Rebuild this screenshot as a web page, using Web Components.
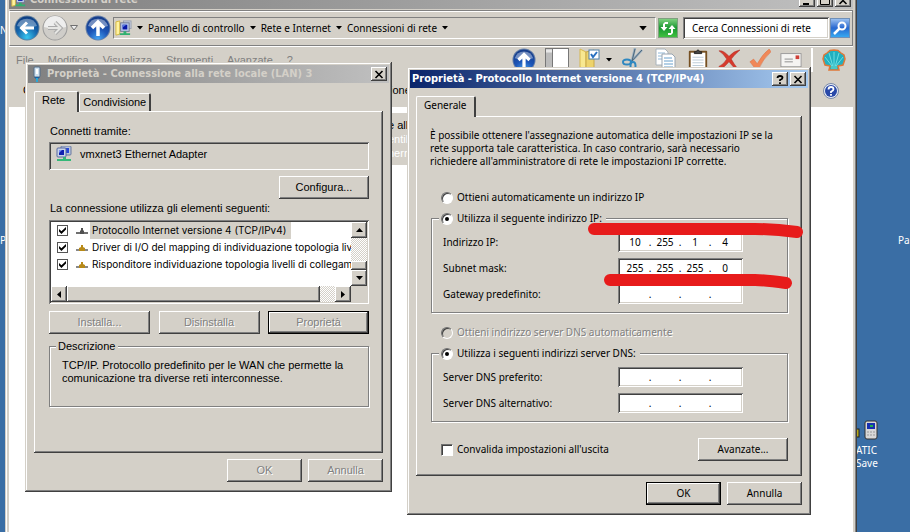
<!DOCTYPE html>
<html lang="it">
<head>
<meta charset="utf-8">
<title>Connessioni di rete</title>
<style>
  html, body {
    margin: 0;
    height: 100%;
    overflow: hidden;
  }
  body {
    --face: #d4d0c8;
    --shade: #808080;
    --dark: #404040;
    --ui: "Noto Sans", sans-serif;
    --sans: "Liberation Sans", sans-serif;
    --caption: "DejaVu Sans Condensed", "DejaVu Sans", sans-serif;
    --raised: inset -1px -1px #404040, inset 1px 1px #fff, inset -2px -2px #808080;
    --sunken: inset 1px 1px #808080, inset -1px -1px #fff, inset 2px 2px #404040, inset -2px -2px #d4d0c8;
    font: 10px/13px var(--ui);
    color: #000;
  }
</style>
</head>
<body>
<net-desktop></net-desktop>

<script>
var icons = {
  back: '<svg viewBox="0 0 26 26"><defs><radialGradient id="g" cx=".5" cy=".9" r=".9"><stop offset="0" stop-color="#38c6f0"/><stop offset=".5" stop-color="#1668ae"/><stop offset="1" stop-color="#0c3a80"/></radialGradient></defs><circle cx="13" cy="13" r="12.5" fill="#5f7f9c"/><circle cx="13" cy="13" r="11.5" fill="url(#g)"/><path d="M3 11A10.5 10.5 0 0 1 23 11Q13 14 3 11" fill="#fff" opacity=".35"/><path d="M20 13H8M13 7.5L7.5 13L13 18.5" fill="none" stroke="#fff" stroke-width="3"/></svg>',
  forward: '<svg viewBox="0 0 26 26"><circle cx="13" cy="13" r="12.5" fill="#9b9b9b"/><circle cx="13" cy="13" r="11.5" fill="#cfcdc9"/><path d="M2 12A11 11 0 0 1 24 12Q13 15 2 12" fill="#eee"/><path d="M6 13H18M13 7.5L18.5 13L13 18.5" fill="none" stroke="#aaa" stroke-width="4"/><path d="M6 13H18M13 7.5L18.5 13L13 18.5" fill="none" stroke="#e6e6e4" stroke-width="2"/></svg>',
  up: '<svg viewBox="0 0 26 26"><defs><radialGradient id="g" cx=".5" cy="1" r=".9"><stop offset="0" stop-color="#48a8f4"/><stop offset=".5" stop-color="#1d56b8"/><stop offset="1" stop-color="#163e8c"/></radialGradient></defs><circle cx="13" cy="13" r="12.5" fill="#6880a8"/><circle cx="13" cy="13" r="11.5" fill="url(#g)"/><path d="M3 11A10.5 10.5 0 0 1 23 11Q13 14 3 11" fill="#fff" opacity=".4"/><path d="M13 21V8M7 13L13 7L19 13" fill="none" stroke="#fff" stroke-width="3.5"/></svg>',
  chevron: '<svg viewBox="0 0 8 6"><path d="M.5 .5H7.5L4 5Z" fill="#eee" stroke="#707070"/></svg>',
  arrow: '<svg viewBox="0 0 6 4"><path d="M0 0H6L3 3.5Z"/></svg>',
  net: '<svg viewBox="0 0 16 16"><rect x="5" y="0" width="10" height="9" rx="1" fill="#b8c4dc" stroke="#6878a0"/><rect x="7" y="2" width="6" height="5" fill="#2848d8"/><rect x="1" y="2" width="9" height="9" rx="1" fill="#c8d4e8" stroke="#5868a0"/><rect x="3" y="4" width="5" height="5" fill="#1020b0"/><path d="M3 4H6L3 7Z" fill="#7890f0"/><path d="M7 11H10V13H15V15H1V13H7Z" fill="#35b878"/></svg>',
  netfolder: '<svg viewBox="0 0 18 18"><path d="M1 2L5 1V15L1 16Z" fill="#fff3a0" stroke="#d8b840"/><rect x="9" y="1" width="8" height="8" fill="#c8d0e0" stroke="#98a0b0"/><rect x="6" y="3" width="9" height="9" fill="#b8c8ec" stroke="#707890"/><rect x="8" y="5" width="5" height="5" fill="#0818a8"/><path d="M8 5H12L8 8Z" fill="#5878e0"/><path d="M9 12H12V14H16V16H5V14H9Z" fill="#30b070"/></svg>',
  plug: '<svg viewBox="0 0 10 16"><rect x="2" y="1" width="6" height="10" rx="1" fill="#cfe0ee" stroke="#506c88"/><path d="M5 3V8" stroke="#fff" stroke-width="2"/><path d="M2 11H8L6 13H4Z" fill="#1d60a0"/><path d="M5 12V16" stroke="#28a8d8" stroke-width="2"/></svg>',
  refresh: '<svg viewBox="0 0 20 20"><defs><linearGradient id="g" x2="0" y2="1"><stop stop-color="#7fd07f"/><stop offset=".5" stop-color="#189830"/><stop offset="1" stop-color="#40c040"/></linearGradient></defs><rect width="20" height="20" fill="#80a080"/><rect x="1" y="1" width="18" height="18" fill="url(#g)"/><path d="M10 6H7V9H9.5L6 13L2.5 9H5V6L7 4H10ZM10 15H13V11H10.5L14 7L17.5 11H15V15L13 17H10Z" fill="#fff"/></svg>',
  search: '<svg viewBox="0 0 20 20"><defs><linearGradient id="g" x2="0" y2="1"><stop stop-color="#9ac0f0"/><stop offset=".5" stop-color="#2868d0"/><stop offset="1" stop-color="#38a8f0"/></linearGradient></defs><rect width="20" height="20" fill="#7090b8"/><rect x="1" y="1" width="18" height="18" fill="url(#g)"/><circle cx="12" cy="8" r="3.5" fill="none" stroke="#fff" stroke-width="2"/><path d="M9.5 10.5L4 16" stroke="#fff" stroke-width="2.5"/></svg>',
  split: '<svg viewBox="0 0 24 24"><rect x=".5" y=".5" width="23" height="23" fill="#fff" stroke="#777"/><rect x="1" y="1" width="6" height="22" fill="#bbb"/><path d="M7.5 1V23" stroke="#777"/><path d="M1 3H7" stroke="#e8e8e8" stroke-width="3"/></svg>',
  folder: '<svg viewBox="0 0 24 24"><path d="M2 1L8 4V22L2 19Z" fill="#f8e890" stroke="#d8b850"/><path d="M8 4L16 2V20L8 22Z" fill="#edd36c" stroke="#c8a848"/><rect x="11" y="2" width="10" height="9" fill="#fff" stroke="#5080a8"/><path d="M13 6L15 9L19 4" fill="none" stroke="#2870c0" stroke-width="2"/></svg>',
  cut: '<svg viewBox="0 0 24 24"><path d="M14 0L11 13M21 2L9 15" stroke="#9ab0c0" stroke-width="2.5"/><path d="M14 1L11 13M21 2L10 14" stroke="#4a6478" fill="none"/><ellipse cx="6" cy="14" rx="4" ry="2.5" fill="none" stroke="#3088c0" stroke-width="2"/><ellipse cx="12" cy="18" rx="2.5" ry="4" fill="none" stroke="#3088c0" stroke-width="2"/></svg>',
  copy: '<svg viewBox="0 0 24 24"><path d="M2 1H11L14 4V17H2Z" fill="#fff" stroke="#aab4bc"/><path d="M4 5H11M4 8H9M4 11H9" stroke="#90b8d8"/><path d="M8 6H18L21 9V23H8Z" fill="#fff" stroke="#98a4b0"/><path d="M10 10H18M10 13H19M10 16H19M10 19H19" stroke="#68a0cc"/></svg>',
  paste: '<svg viewBox="0 0 24 24"><rect x="2" y="2" width="20" height="22" rx="1" fill="#765022"/><rect x="4" y="4" width="16" height="20" fill="#fff"/><path d="M8 5V3H10Q12 -1 14 3H16V5Z" fill="#444" stroke="#222"/><path d="M6 9H18M6 12H18M6 15H18M6 18H18" stroke="#b8c8d4"/></svg>',
  del: '<svg viewBox="0 0 24 24"><path d="M1 2Q6 1 12 8Q17 2 24 1Q18 6 14.5 11Q17 16 22 22L18 21L12 14Q7 20 3 22L1 19Q6 17 9.5 11Q6 5 1 2Z" fill="#d63a2c" stroke="#a82820" stroke-width=".5"/></svg>',
  check: '<svg viewBox="0 0 24 24"><path d="M1 14L5 11L9 16Q15 5 22 0L24 3Q15 11 10 23H8Z" fill="#f08858" stroke="#d86c40" stroke-width=".5"/></svg>',
  mail: '<svg viewBox="0 0 24 24"><rect x="1" y="5" width="22" height="15" fill="#f5f4f2" stroke="#999"/><path d="M5 11H14M5 14H14" stroke="#888"/><rect x="17" y="7" width="4" height="4" fill="#d04038"/><path d="M1 20H23" stroke="#888" stroke-width="2"/></svg>',
  shell: '<svg viewBox="0 0 24 22"><path d="M7 21L8 17L3 16L1 10L2 6L5 4L8 1.5L12 1L16 1.5L19 4L22 6L23 10L21 16L16 17L17 21Z" fill="#20b0c0" stroke="#e07838" stroke-width="1.5"/><path d="M12 18V3M11 18L7 4M13 18L17 4M10 17L3 8M14 17L21 8" stroke="#80e8e8" stroke-width=".8"/><path d="M9 20V17H15V20Z" fill="#48c8c8"/></svg>',
  help: '<svg viewBox="0 0 16 16"><circle cx="8" cy="8" r="7.5" fill="#e8ecf4" stroke="#7888a8"/><circle cx="8" cy="8" r="6" fill="#2848a8"/><path d="M5.5 6.5Q5.5 4 8 4T10.5 6.2Q10.5 7.4 8 8.8V10M8 11V12.8" stroke="#fff" stroke-width="1.8" fill="none"/></svg>',
  close: '<svg viewBox="0 0 10 9"><path d="M1.500 1L8.500 8M8.500 1L1.500 8" stroke="#000" stroke-width="1.6"/></svg>',
  max: '<svg viewBox="0 0 10 9"><path d="M.5 1H9.5V8.5H.5Z" fill="none" stroke="#000"/><path d="M0 1H10" stroke="#000" stroke-width="2"/></svg>',
  min: '<svg viewBox="0 0 10 9"><path d="M1 8H7" stroke="#000" stroke-width="2"/></svg>',
  query: '<svg viewBox="0 0 10 9"><path d="M2.5 3Q2.5 1 5 1T7.5 2.8Q7.5 4 5 5V6M5 7.2V9" stroke="#000" stroke-width="1.8" fill="none"/></svg>',
  proto: '<svg viewBox="0 0 12 10"><path d="M0 7H12" stroke="#707070" stroke-width="2"/><path d="M4 8V5L5 4V2H7V4L8 5V8Z" fill="#505050"/></svg>',
  driver: '<svg viewBox="0 0 12 10"><path d="M0 7H12" stroke="#888" stroke-width="2"/><path d="M3 8V5L5 4V2H7V4L9 5V8Z" fill="#b88a18"/></svg>',
  tu: '<svg viewBox="0 0 7 4"><path d="M0 4H7L3.5 0Z"/></svg>',
  td: '<svg viewBox="0 0 7 4"><path d="M0 0H7L3.5 4Z"/></svg>',
  tl: '<svg viewBox="0 0 4 7"><path d="M4 0V7L0 3.5Z"/></svg>',
  tr: '<svg viewBox="0 0 4 7"><path d="M0 0V7L4 3.5Z"/></svg>',
  phone: '<svg viewBox="0 0 24 20"><rect x="0" y="9" width="4" height="8" fill="#b8a818" stroke="#222"/><rect x="10" y="1" width="12" height="18" rx="2" fill="#d8d8d8" stroke="#333"/><rect x="12" y="3" width="8" height="6" fill="#1830b0"/><rect x="15" y="5" width="3" height="2" fill="#28b048"/><path d="M12 12H20M12 15H20" stroke="#999" stroke-dasharray="2 1"/></svg>'
};

function define(name, css, html, setup) {
  var t = document.createElement('template');
  t.innerHTML = '<style>*{box-sizing:border-box}' + css + '</style>' + html;
  customElements.define(name, class extends HTMLElement {
    constructor() {
      super();
      this.attachShadow({mode: 'open'}).appendChild(t.content.cloneNode(true));
    }
    connectedCallback() {
      if(setup && !this.ready) {
        this.ready = true;
        setup(this, this.shadowRoot);
      }
    }
  });
}

// <net-icon name="..." w="16" h="16">
define('net-icon', ':host{display:block;flex:none}span,svg{display:block;width:100%;height:100%}', '<span></span>', function(el, root) {
  root.querySelector('span').innerHTML = icons[el.getAttribute('name')];
  el.style.width = el.getAttribute('w') + 'px';
  el.style.height = (el.getAttribute('h') || el.getAttribute('w')) + 'px';
});

// push button in the classic bevel
define('net-button',
  ':host{display:block;width:75px}' +
  'button{display:block;width:100%;height:23px;padding:0;border:0;background:var(--face);box-shadow:var(--raised);font:inherit;color:inherit}' +
  ':host([wide]){width:90px}:host([large]){width:101px}' +
  ':host([default]) button{border:1px solid #000}' +
  'button:disabled{color:var(--shade);text-shadow:1px 1px #fff}',
  '<button type="button"><slot></slot></button>',
  function(el, root) {
    root.querySelector('button').disabled = el.hasAttribute('disabled');
  });

// small square button with a glyph in it
define('net-mini',
  ':host{display:block;flex:none;width:16px;height:14px}' +
  'button{display:flex;align-items:center;justify-content:center;width:100%;height:100%;padding:0;border:0;background:var(--face);box-shadow:var(--raised)}',
  '<button type="button"></button>',
  function(el, root) {
    var b = root.querySelector('button');
    b.setAttribute('aria-label', el.getAttribute('label'));
    b.innerHTML = '<net-icon name="' + el.getAttribute('glyph') + '" w="' + (el.getAttribute('w') || 10) + '" h="' + (el.getAttribute('h') || 9) + '"></net-icon>';
  });

// bare button around a picture
define('net-tool',
  ':host{display:block;flex:none}button{display:block;padding:0;border:0;background:none}',
  '<button type="button"></button>',
  function(el, root) {
    var b = root.querySelector('button');
    b.setAttribute('aria-label', el.getAttribute('label'));
    b.innerHTML = '<net-icon name="' + el.getAttribute('glyph') + '" w="' + el.getAttribute('w') + '" h="' + (el.getAttribute('h') || el.getAttribute('w')) + '"></net-icon>';
  });

define('net-window',
  ':host{display:flex;flex-direction:column;position:absolute;padding:3px;background:var(--face);box-sizing:border-box;' +
    'box-shadow:inset -1px -1px #404040,inset 1px 1px var(--face),inset -2px -2px #808080,inset 2px 2px #fff}' +
  'header{display:flex;flex:none;align-items:center;height:18px;padding:0 2px;background:linear-gradient(90deg,#808080,#c0c0c0);color:var(--face);font:bold 11px/18px var(--caption);white-space:nowrap}' +
  ':host([active]) header{background:linear-gradient(90deg,#0a246a,#a6caf0);color:#fff}' +
  '.title{flex:1;display:flex;align-items:center;gap:3px}' +
  'nav{display:flex;gap:2px}' +
  'main{display:flex;flex:1;flex-direction:column}',
  '<header><div class="title"><slot name="icon"></slot><slot name="title"></slot></div><nav><slot name="controls"></slot></nav></header><main><slot></slot></main>');

// property sheet: tabs over a raised panel, a row of buttons under it
define('net-sheet',
  ':host{display:block;padding:8px 6px 7px}' +
  '.tabs{display:flex;align-items:flex-end;height:20px}' +
  '.tabs button{height:18px;padding:0 3px;border:1px solid #fff;border-right:2px solid var(--dark);border-bottom:0;border-radius:2px 2px 0 0;background:var(--face);font:inherit;color:inherit}' +
  '.tabs button:first-child{position:relative;height:21px;margin-bottom:-1px;padding:0 12px 3px 7px}' +
  ':host([single]) .tabs button:first-child{padding-right:7px}' +
  '.panel{display:flex;flex-direction:column;padding:14px 14px 14px 15px;box-shadow:var(--raised)}' +
  ':host([single]) .panel{padding:13px 14px 15px}' +
  '.foot{display:flex;justify-content:flex-end;gap:6px;margin-top:6px}',
  '<div class="tabs" role="tablist"></div><div class="panel"><slot></slot></div><div class="foot"><slot name="foot"></slot></div>',
  function(el, root) {
    var s = '';
    el.getAttribute('tabs').split(',').forEach(function(name, i) {
      s += '<button type="button" role="tab" aria-selected="' + (i === 0) + '">' + name + '</button>';
    });
    root.querySelector('.tabs').innerHTML = s;
  });

define('net-group',
  ':host{display:block}' +
  'fieldset{min-width:0;margin:0;padding:6px 12px 8px 11px;border:1px solid var(--shade);box-shadow:1px 1px #fff,inset 1px 1px #fff}' +
  'legend{padding:0 3px 0 2px;margin-left:-5px;background:var(--face)}' +
  ':host([fields]) fieldset{padding-top:7px}' +
  ':host([fields]) legend{margin-left:-4px;padding:0 4px 0 2px}' +
  '.in{display:flex;flex-direction:column;gap:6px}',
  '<fieldset><legend><slot name="legend"></slot></legend><div class="in"><slot></slot></div></fieldset>');

define('net-choice',
  ':host{display:block}' +
  'label{display:flex;align-items:center;gap:4px;height:13px;white-space:nowrap}' +
  'input{appearance:none;flex:none;width:12px;height:12px;margin:0;background:#fff;border:1px solid;border-color:#707070 #fff #fff #707070;box-shadow:inset 1px 1px #404040;display:grid;place-items:center}' +
  'input[type=radio]{border-radius:50%}' +
  'input[type=radio]:checked::before{content:"";width:4px;height:4px;border-radius:50%;background:#000}' +
  'input[type=radio]:disabled{background:var(--face)}' +
  'input:disabled + span{color:var(--shade);text-shadow:1px 1px #fff}',
  '<label><input><span></span></label>',
  function(el, root) {
    var input = root.querySelector('input');
    input.type = el.getAttribute('type');
    input.checked = el.hasAttribute('checked');
    input.disabled = el.hasAttribute('disabled');
    root.querySelector('span').textContent = el.getAttribute('text');
  });

define('net-ip',
  ':host{display:grid;grid-template-columns:175px 125px;align-items:center}' +
  '.box{display:flex;align-items:center;height:20px;padding:0 3px 0 4px;background:#fff;box-shadow:var(--sunken)}' +
  'input{width:26px;height:14px;margin:0;padding:0;border:0;background:none;font:inherit;text-align:center;outline:0}' +
  'i{width:4px;font-style:normal;text-align:center}',
  '<label for="o0" id="l"></label><div class="box"></div>',
  function(el, root) {
    var parts = (el.getAttribute('value') || '...').split('.');
    var s = '';
    parts.forEach(function(part, i) {
      if(i) s += '<i>.</i>';
      s += '<input id="o' + i + '" aria-labelledby="l" maxlength="3" value="' + part + '">';
    });
    root.querySelector('label').textContent = el.getAttribute('text');
    root.querySelector('.box').innerHTML = s;
  });

define('net-item',
  ':host{display:block}' +
  'label{display:flex;align-items:center;height:17px;padding-left:6px;white-space:nowrap}' +
  'input{appearance:none;flex:none;width:11px;height:11px;margin:0 8px 0 0;border:1px solid #555;background:#fff}' +
  'input:checked::before{content:"";display:block;width:7px;height:7px;margin:1px;background:#000;clip-path:polygon(0 30%,35% 62%,100% 0,100% 36%,35% 100%,0 66%)}' +
  'span{margin-left:2px;padding:0 5px 0 2px;font:10px/17px Inter,sans-serif}' +
  ':host([selected]) span{background:var(--face)}',
  '<label><input type="checkbox" checked><span><slot></slot></span></label>',
  function(el, root) {
    var icon = document.createElement('net-icon');
    icon.setAttribute('name', el.getAttribute('icon'));
    icon.setAttribute('w', 12);
    icon.setAttribute('h', 10);
    root.querySelector('label').insertBefore(icon, root.querySelector('span'));
  });

define('net-list',
  ':host{display:grid;grid-template:1fr 16px/1fr 16px;height:84px;padding:2px;background:#fff;box-shadow:var(--sunken)}' +
  '.rows{overflow:hidden}' +
  '.v,.h{display:flex;background:repeating-conic-gradient(#fff 0 25%,var(--face) 0 50%) 0 0/2px 2px}' +
  '.v{flex-direction:column}' +
  'net-mini{height:16px}' +
  '.gap{flex:1}' +
  '.thumb{background:var(--face);box-shadow:var(--raised)}' +
  '.v .thumb{height:9px}.h .thumb{flex:17}' +
  '.corner{background:var(--face)}',
  '<div class="rows"><slot></slot></div>' +
  '<div class="v"><net-mini glyph="tu" w="7" h="4" label="Su"></net-mini><div class="gap"></div><div class="thumb"></div><net-mini glyph="td" w="7" h="4" label="Giù"></net-mini></div>' +
  '<div class="h"><net-mini glyph="tl" w="4" h="7" label="Sinistra"></net-mini><div class="thumb"></div><div class="gap"></div><net-mini glyph="tr" w="4" h="7" label="Destra"></net-mini></div>' +
  '<div class="corner"></div>');

define('net-address',
  ':host{display:flex;align-items:center;flex:none;height:36px;margin-top:1px;padding:0 2px 0 4px;border:1px solid var(--shade);border-left-color:#fff;box-shadow:inset 0 1px #fff,0 1px #fff}' +
  '.nav{display:flex;align-items:center;gap:2px}' +
  '.nav net-tool:last-child{margin-left:5px}' +
  '.path{display:flex;flex:1;align-items:center;gap:5px;height:22px;margin-left:2px;padding:0 8px 0 1px;border:1px solid;border-color:var(--shade) #fff #fff var(--shade);white-space:nowrap}' +
  '.path a{color:#000;text-decoration:none}' +
  '.path span{flex:1}' +
  'input{width:146px;height:22px;margin:0 1px 0 5px;padding:0 2px 0 9px;border:0;background:#fff;box-shadow:var(--sunken);font:inherit;color:#000;outline:0}' +
  'input::placeholder{color:#000;opacity:1}',
  '<div class="nav"><net-tool glyph="back" w="26" label="Indietro"></net-tool><net-tool glyph="forward" w="26" label="Avanti"></net-tool><net-icon name="chevron" w="8" h="6"></net-icon><net-tool glyph="up" w="26" label="Livello superiore"></net-tool></div>' +
  '<div class="path"><net-icon name="netfolder" w="17"></net-icon><net-icon name="arrow" w="6" h="4"></net-icon><a href="#">Pannello di controllo</a><net-icon name="arrow" w="6" h="4"></net-icon><a href="#">Rete e Internet</a><net-icon name="arrow" w="6" h="4"></net-icon><a href="#">Connessioni di rete</a><net-icon name="arrow" w="6" h="4"></net-icon><span></span><net-icon name="arrow" w="8" h="5"></net-icon></div>' +
  '<net-tool glyph="refresh" w="20" label="Aggiorna" style="margin-left:2px"></net-tool>' +
  '<input type="text" aria-label="Cerca" placeholder="Cerca Connessioni di rete"><net-tool glyph="search" w="20" label="Cerca"></net-tool>');

define('net-explorer',
  ':host{display:flex;flex:1;flex-direction:column}' +
  '.menu{display:flex;align-items:center;flex:none;height:28px;padding:0 7px;font:11px/13px var(--sans)}' +
  '.menu a{margin-right:14px;color:var(--shade);text-decoration:none}' +
  '.tools,.drop{display:flex;align-items:center;gap:9px}' +
  '.tools{margin-left:auto}' +
  '.drop{gap:4px}' +
  '.tools hr{width:2px;height:24px;margin:0;border:0;background:#fff}' +
  '.commands{display:flex;align-items:center;flex:none;height:33px;padding:0 14px;font:11px/13px var(--sans)}' +
  '.commands span:first-child{width:367px}' +
  '.commands net-tool{margin-left:auto}' +
  '.content{flex:1;padding-top:6px;background:#fff;font:11px/14px var(--sans)}' +
  '.card{width:120px;margin-left:345px;padding:5px 0 5px 34px;background:var(--face);color:#fff}' +
  '.card b{display:block;color:#000;font-weight:normal}',
  '<net-address></net-address>' +
  '<div class="menu"><a href="#">File</a><a href="#">Modifica</a><a href="#">Visualizza</a><a href="#">Strumenti</a><a href="#">Avanzate</a><a href="#">?</a>' +
  '<div class="tools"><net-tool glyph="up" w="24" label="Su"></net-tool><net-tool glyph="split" w="24" label="Riquadro"></net-tool><div class="drop"><net-tool glyph="folder" w="24" label="Cartella"></net-tool><net-icon name="arrow" w="6" h="4"></net-icon></div><net-tool glyph="cut" w="24" label="Taglia"></net-tool><net-tool glyph="copy" w="24" label="Copia"></net-tool><net-tool glyph="paste" w="22" label="Incolla"></net-tool><net-tool glyph="del" w="22" label="Elimina"></net-tool><net-tool glyph="check" w="22" label="Conferma"></net-tool><net-tool glyph="mail" w="22" label="Posta"></net-tool><hr><net-tool glyph="shell" w="24" h="22" label="Shell"></net-tool></div></div>' +
  '<div class="commands"><span>C</span><span>ione</span><net-tool glyph="help" w="16" label="Guida"></net-tool></div>' +
  '<div class="content"><div class="card"><b>e all</b>entil<br>herr</div></div>');

define('net-lan',
  ':host{display:block;font:11px/13px var(--sans)}' +
  '.adapter{display:flex;align-items:center;gap:8px;height:28px;margin:4px 0 6px;padding:0 7px 4px;box-shadow:var(--sunken)}' +
  'net-button[wide]{align-self:flex-end}' +
  'p{margin:0}' +
  '.head{padding-left:1px}' +
  'net-button + .head{margin-top:3px}' +
  'net-list{margin:5px 0 7px}' +
  '.row{display:flex;justify-content:space-between;gap:8px}' +
  'net-group{margin:6px 0 32px}' +
  '.text{padding-bottom:13px;padding-left:1px}',
  '<net-sheet tabs="Rete,Condivisione">' +
  '<p class="head">Connetti tramite:</p>' +
  '<div class="adapter"><net-icon name="net" w="16"></net-icon><span>vmxnet3 Ethernet Adapter</span></div>' +
  '<net-button wide>Configura...</net-button>' +
  '<p class="head">La connessione utilizza gli elementi seguenti:</p>' +
  '<net-list><net-item icon="proto" selected>Protocollo Internet versione 4 (TCP/IPv4)</net-item><net-item icon="driver">Driver di I/O del mapping di individuazione topologia liv</net-item><net-item icon="driver">Risponditore individuazione topologia livelli di collegame</net-item></net-list>' +
  '<div class="row"><net-button large disabled>Installa...</net-button><net-button large disabled>Disinstalla</net-button><net-button large disabled default>Proprietà</net-button></div>' +
  '<net-group><span slot="legend">Descrizione</span><p class="text">TCP/IP. Protocollo predefinito per le WAN che permette la comunicazione tra diverse reti interconnesse.</p></net-group>' +
  '<net-button slot="foot" disabled>OK</net-button><net-button slot="foot" disabled>Annulla</net-button>' +
  '</net-sheet>');

define('net-ipv4',
  ':host{display:block}' +
  'p{margin:0 0 23px}' +
  'net-choice.in{margin:0 0 8px 11px}' +
  'net-group{margin:0 0 13px 1px}' +
  '.row{display:flex;align-items:center;justify-content:space-between;margin:3px 0 0 11px}',
  '<net-sheet single tabs="Generale">' +
  '<p>È possibile ottenere l\'assegnazione automatica delle impostazioni IP se la rete supporta tale caratteristica. In caso contrario, sarà necessario richiedere all\'amministratore di rete le impostazioni IP corrette.</p>' +
  '<net-choice class="in" type="radio" text="Ottieni automaticamente un indirizzo IP"></net-choice>' +
  '<net-group fields><net-choice slot="legend" type="radio" checked text="Utilizza il seguente indirizzo IP:"></net-choice>' +
  '<net-ip text="Indirizzo IP:" value="10.255.1.4"></net-ip><net-ip text="Subnet mask:" value="255.255.255.0"></net-ip><net-ip text="Gateway predefinito:"></net-ip></net-group>' +
  '<net-choice class="in" type="radio" disabled text="Ottieni indirizzo server DNS automaticamente"></net-choice>' +
  '<net-group fields><net-choice slot="legend" type="radio" checked text="Utilizza i seguenti indirizzi server DNS:"></net-choice>' +
  '<net-ip text="Server DNS preferito:"></net-ip><net-ip text="Server DNS alternativo:"></net-ip></net-group>' +
  '<div class="row"><net-choice type="checkbox" text="Convalida impostazioni all\'uscita"></net-choice><net-button wide>Avanzate...</net-button></div>' +
  '<net-button slot="foot" default>OK</net-button><net-button slot="foot">Annulla</net-button>' +
  '</net-sheet>');

// desktop with its shortcuts, the three windows and the red marker lines
define('net-desktop',
  ':host{display:block;position:relative;height:100%;overflow:hidden;background:#3a6ea5}' +
  '.label{position:absolute;color:#fff}' +
  '.explorer{top:-13px;right:53px;bottom:-4px;left:5px;padding:4px}' +
  '.lan{top:62px;left:25px;width:367px}' +
  '.ipv4{top:67px;left:407px;width:404px}' +
  '.marker{position:absolute;top:220px;left:584px;width:224px;height:72px;pointer-events:none}',
  '<span class="label" style="left:0;top:24px">N</span><span class="label" style="left:0;top:234px">P</span>' +
  '<span class="label" style="left:898px;top:234px">Pa</span>' +
  '<net-icon class="label" name="phone" w="24" h="20" style="left:855px;top:420px"></net-icon>' +
  '<span class="label" style="left:856px;top:444px">ATIC<br>Save</span>' +
  '<net-window class="explorer"><net-icon slot="icon" name="netfolder" w="16"></net-icon><span slot="title">Connessioni di rete</span><net-mini slot="controls" glyph="min" label="Riduci"></net-mini><net-mini slot="controls" glyph="max" label="Ingrandisci"></net-mini><net-mini slot="controls" glyph="close" label="Chiudi"></net-mini><net-explorer></net-explorer></net-window>' +
  '<net-window class="lan"><net-icon slot="icon" name="plug" w="14" h="16"></net-icon><span slot="title">Proprietà - Connessione alla rete locale (LAN) 3</span><net-mini slot="controls" glyph="close" label="Chiudi"></net-mini><net-lan></net-lan></net-window>' +
  '<net-window class="ipv4" active><span slot="title">Proprietà - Protocollo Internet versione 4 (TCP/IPv4)</span><net-mini slot="controls" glyph="query" label="Guida"></net-mini><net-mini slot="controls" glyph="close" label="Chiudi"></net-mini><net-ipv4></net-ipv4></net-window>' +
  '<svg class="marker" viewBox="584 220 224 72"><g fill="none" stroke="#e71b1b" stroke-width="12" stroke-linecap="round" stroke-linejoin="round"><path d="M594 229H755Q775 229 797 232"/><path d="M610 280H755Q765 280 786 283"/></g></svg>');
</script>
</body>
</html>
